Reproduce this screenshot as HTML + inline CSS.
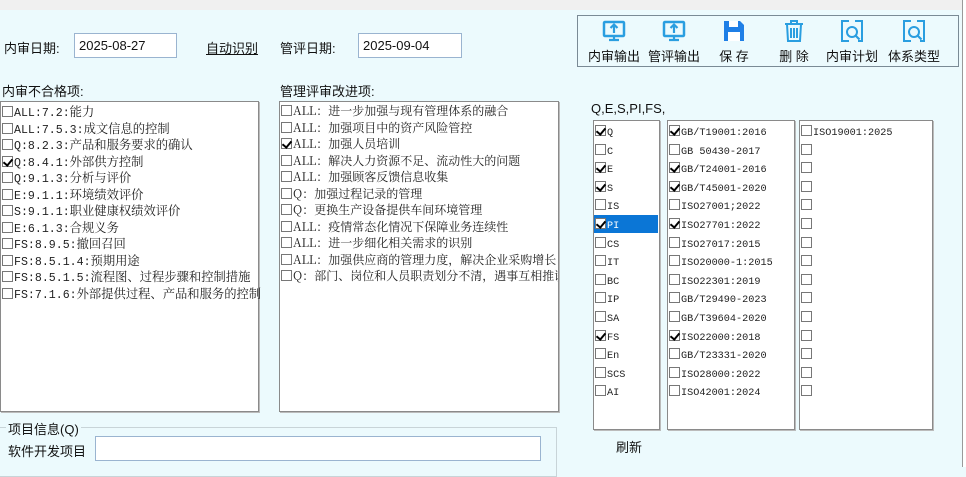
<!DOCTYPE html>
<html><head><meta charset="utf-8"><style>
*{box-sizing:border-box;margin:0;padding:0}
body{width:966px;height:467px;overflow:hidden;background:#ecfafd;position:relative;font-family:"Liberation Sans","Noto Sans CJK SC",sans-serif;font-size:13px;color:#111}
.a{position:absolute}
.title{left:0;top:0;width:966px;height:10px;background:#f0f0f0}
.inp{background:#fff;border:1px solid #9ab4d0;font-size:13px;padding:2px 4px;height:25px;line-height:19px}
.box{background:#fff;border:1px solid #8a8a8a;box-shadow:1px 1px 0 #bbb}
.row{position:absolute;left:2px;white-space:nowrap;font-family:"Noto Serif CJK SC",serif;font-size:12px;line-height:16px;height:16px;color:#222}
.row i{font-family:"Liberation Mono",monospace;font-style:normal;font-size:10.7px}
.L .row{font-size:12.3px}
.L .row i{font-size:11.6px}
.R .row i{font-size:10.2px}
.cb{display:inline-block;width:11px;height:11px;border:1px solid #777;background:#fff;vertical-align:-1px;margin-right:1px;position:relative}
.cb.c::after{content:"";position:absolute;left:2px;top:0px;width:4px;height:7px;border:solid #000;border-width:0 2px 2px 0;transform:rotate(40deg)}
.tb{top:15px;left:577px;width:382px;height:52px;border:1px solid #7a8a95}
.btn{position:absolute;top:18px;font-size:13px;text-align:center;width:60px}
.btn svg{display:block;margin:0 auto 2px}
</style></head><body>
<div class="a title"></div>
<div class="a" style="left:4px;top:38px">内审日期:</div>
<div class="a inp" style="left:74px;top:33px;width:103px">2025-08-27</div>
<div class="a" style="left:206px;top:38px;text-decoration:underline">自动识别</div>
<div class="a" style="left:280px;top:38px">管评日期:</div>
<div class="a inp" style="left:358px;top:33px;width:104px">2025-09-04</div>
<div class="a" style="left:2px;top:81px">内审不合格项:</div>
<div class="a" style="left:280px;top:81px">管理评审改进项:</div>

<div class="a box" style="left:0;top:101px;width:259px;height:311px"></div>
<div class="a L" style="left:0;top:103px">
<div class="row" style="top:0"><span class="cb"></span><i>ALL:7.2:</i>能力</div>
<div class="row" style="top:16.5px"><span class="cb"></span><i>ALL:7.5.3:</i>成文信息的控制</div>
<div class="row" style="top:33px"><span class="cb"></span><i>Q:8.2.3:</i>产品和服务要求的确认</div>
<div class="row" style="top:49.5px"><span class="cb c"></span><i>Q:8.4.1:</i>外部供方控制</div>
<div class="row" style="top:66px"><span class="cb"></span><i>Q:9.1.3:</i>分析与评价</div>
<div class="row" style="top:82.5px"><span class="cb"></span><i>E:9.1.1:</i>环境绩效评价</div>
<div class="row" style="top:99px"><span class="cb"></span><i>S:9.1.1:</i>职业健康权绩效评价</div>
<div class="row" style="top:115.5px"><span class="cb"></span><i>E:6.1.3:</i>合规义务</div>
<div class="row" style="top:132px"><span class="cb"></span><i>FS:8.9.5:</i>撤回召回</div>
<div class="row" style="top:148.5px"><span class="cb"></span><i>FS:8.5.1.4:</i>预期用途</div>
<div class="row" style="top:165px"><span class="cb"></span><i>FS:8.5.1.5:</i>流程图、过程步骤和控制措施</div>
<div class="row" style="top:181.5px"><span class="cb"></span><i>FS:7.1.6:</i>外部提供过程、产品和服务的控制</div>
</div>

<div class="a box" style="left:279px;top:101px;width:280px;height:311px;overflow:hidden">
<div class="row" style="top:1px;left:1px"><span class="cb"></span>ALL：进一步加强与现有管理体系的融合</div>
<div class="row" style="top:17.5px;left:1px"><span class="cb"></span>ALL：加强项目中的资产风险管控</div>
<div class="row" style="top:34px;left:1px"><span class="cb c"></span>ALL：加强人员培训</div>
<div class="row" style="top:50.5px;left:1px"><span class="cb"></span>ALL：解决人力资源不足、流动性大的问题</div>
<div class="row" style="top:67px;left:1px"><span class="cb"></span>ALL：加强顾客反馈信息收集</div>
<div class="row" style="top:83.5px;left:1px"><span class="cb"></span>Q：加强过程记录的管理</div>
<div class="row" style="top:100px;left:1px"><span class="cb"></span>Q：更换生产设备提供车间环境管理</div>
<div class="row" style="top:116.5px;left:1px"><span class="cb"></span>ALL：疫情常态化情况下保障业务连续性</div>
<div class="row" style="top:133px;left:1px"><span class="cb"></span>ALL：进一步细化相关需求的识别</div>
<div class="row" style="top:149.5px;left:1px"><span class="cb"></span>ALL：加强供应商的管理力度，解决企业采购增长</div>
<div class="row" style="top:166px;left:1px"><span class="cb"></span>Q：部门、岗位和人员职责划分不清，遇事互相推诿</div>
</div>

<div class="a tb"></div>
<div class="btn a" style="left:584px"><svg width="26" height="26" viewBox="0 0 26 26"><rect x="3" y="4" width="20" height="14" rx="1" fill="none" stroke="#2a9ee0" stroke-width="2.5"/><path d="M13 15V7M9.5 10l3.5-3.5 3.5 3.5M8 22h10M13 18v4" stroke="#2a9ee0" stroke-width="2.2" fill="none"/></svg>内审输出</div>
<div class="btn a" style="left:644px"><svg width="26" height="26" viewBox="0 0 26 26"><rect x="3" y="4" width="20" height="14" rx="1" fill="none" stroke="#2a9ee0" stroke-width="2.5"/><path d="M13 15V7M9.5 10l3.5-3.5 3.5 3.5M8 22h10M13 18v4" stroke="#2a9ee0" stroke-width="2.2" fill="none"/></svg>管评输出</div>
<div class="btn a" style="left:704px"><svg width="26" height="26" viewBox="0 0 26 26"><path d="M3 3h16l4 4v16H3z" fill="#1f7fe6"/><rect x="8" y="3" width="9" height="6" fill="#fff"/><rect x="7" y="14" width="12" height="9" fill="#fff"/></svg>保 存</div>
<div class="btn a" style="left:764px"><svg width="26" height="26" viewBox="0 0 26 26"><path d="M4 6h18M10 6V3h6v3M6 6l1 17h12l1-17M10 10v10M13 10v10M16 10v10" stroke="#2a9ee0" stroke-width="2" fill="none"/></svg>删 除</div>
<div class="btn a" style="left:822px"><svg width="26" height="26" viewBox="0 0 26 26"><path d="M10 3H3v20h7M16 3h7v20h-4" stroke="#2a9ee0" stroke-width="2" fill="none"/><circle cx="13" cy="14" r="5" stroke="#2a9ee0" stroke-width="2" fill="none"/><path d="M16.5 17.5l4 4" stroke="#2a9ee0" stroke-width="2.2"/></svg>内审计划</div>
<div class="btn a" style="left:884px"><svg width="26" height="26" viewBox="0 0 26 26"><path d="M10 3H3v20h7M16 3h7v20h-4" stroke="#2a9ee0" stroke-width="2" fill="none"/><circle cx="13" cy="14" r="5" stroke="#2a9ee0" stroke-width="2" fill="none"/><path d="M16.5 17.5l4 4" stroke="#2a9ee0" stroke-width="2.2"/></svg>体系类型</div>

<div class="a" style="left:591px;top:101px;font-size:13px">Q,E,S,PI,FS,</div>
<div class="a box R" style="left:593px;top:120px;width:67px;height:310px">
<div class="row" style="top:2px;left:1px"><span class="cb c"></span><i>Q</i></div>
<div class="row" style="top:20.6px;left:1px"><span class="cb"></span><i>C</i></div>
<div class="row" style="top:39.2px;left:1px"><span class="cb c"></span><i>E</i></div>
<div class="row" style="top:57.8px;left:1px"><span class="cb c"></span><i>S</i></div>
<div class="row" style="top:76.4px;left:1px"><span class="cb"></span><i>IS</i></div>
<div class="row" style="top:94px;left:0;width:64px;height:18px;background:#0b76d6;color:#fff;padding-left:1px;line-height:18px"><span class="cb c"></span><i>PI</i></div>
<div class="row" style="top:113.6px;left:1px"><span class="cb"></span><i>CS</i></div>
<div class="row" style="top:132.2px;left:1px"><span class="cb"></span><i>IT</i></div>
<div class="row" style="top:150.8px;left:1px"><span class="cb"></span><i>BC</i></div>
<div class="row" style="top:169.4px;left:1px"><span class="cb"></span><i>IP</i></div>
<div class="row" style="top:188px;left:1px"><span class="cb"></span><i>SA</i></div>
<div class="row" style="top:206.6px;left:1px"><span class="cb c"></span><i>FS</i></div>
<div class="row" style="top:225.2px;left:1px"><span class="cb"></span><i>En</i></div>
<div class="row" style="top:243.8px;left:1px"><span class="cb"></span><i>SCS</i></div>
<div class="row" style="top:262.4px;left:1px"><span class="cb"></span><i>AI</i></div>
</div>
<div class="a box R" style="left:667px;top:120px;width:128px;height:310px">
<div class="row" style="top:2px;left:1px"><span class="cb c"></span><i>GB/T19001:2016</i></div>
<div class="row" style="top:20.6px;left:1px"><span class="cb"></span><i>GB 50430-2017</i></div>
<div class="row" style="top:39.2px;left:1px"><span class="cb c"></span><i>GB/T24001-2016</i></div>
<div class="row" style="top:57.8px;left:1px"><span class="cb c"></span><i>GB/T45001-2020</i></div>
<div class="row" style="top:76.4px;left:1px"><span class="cb"></span><i>ISO27001;2022</i></div>
<div class="row" style="top:95px;left:1px"><span class="cb c"></span><i>ISO27701:2022</i></div>
<div class="row" style="top:113.6px;left:1px"><span class="cb"></span><i>ISO27017:2015</i></div>
<div class="row" style="top:132.2px;left:1px"><span class="cb"></span><i>ISO20000-1:2015</i></div>
<div class="row" style="top:150.8px;left:1px"><span class="cb"></span><i>ISO22301:2019</i></div>
<div class="row" style="top:169.4px;left:1px"><span class="cb"></span><i>GB/T29490-2023</i></div>
<div class="row" style="top:188px;left:1px"><span class="cb"></span><i>GB/T39604-2020</i></div>
<div class="row" style="top:206.6px;left:1px"><span class="cb c"></span><i>ISO22000:2018</i></div>
<div class="row" style="top:225.2px;left:1px"><span class="cb"></span><i>GB/T23331-2020</i></div>
<div class="row" style="top:243.8px;left:1px"><span class="cb"></span><i>ISO28000:2022</i></div>
<div class="row" style="top:262.4px;left:1px"><span class="cb"></span><i>ISO42001:2024</i></div>
</div>
<div class="a box R" style="left:799px;top:120px;width:134px;height:310px">
<div class="row" style="top:2px;left:1px"><span class="cb"></span><i>ISO19001:2025</i></div>
<div class="row" style="top:20.6px;left:1px"><span class="cb"></span></div>
<div class="row" style="top:39.2px;left:1px"><span class="cb"></span></div>
<div class="row" style="top:57.8px;left:1px"><span class="cb"></span></div>
<div class="row" style="top:76.4px;left:1px"><span class="cb"></span></div>
<div class="row" style="top:95px;left:1px"><span class="cb"></span></div>
<div class="row" style="top:113.6px;left:1px"><span class="cb"></span></div>
<div class="row" style="top:132.2px;left:1px"><span class="cb"></span></div>
<div class="row" style="top:150.8px;left:1px"><span class="cb"></span></div>
<div class="row" style="top:169.4px;left:1px"><span class="cb"></span></div>
<div class="row" style="top:188px;left:1px"><span class="cb"></span></div>
<div class="row" style="top:206.6px;left:1px"><span class="cb"></span></div>
<div class="row" style="top:225.2px;left:1px"><span class="cb"></span></div>
<div class="row" style="top:243.8px;left:1px"><span class="cb"></span></div>
<div class="row" style="top:262.4px;left:1px"><span class="cb"></span></div>
</div>
<div class="a" style="left:616px;top:437px">刷新</div>

<div class="a" style="left:0;top:427px;width:557px;height:50px;border:1px solid #c8d4d8;border-left:none"></div>
<div class="a" style="left:6px;top:419px;background:#ecfafd;padding:0 2px">项目信息(Q)</div>
<div class="a" style="left:8px;top:441px">软件开发项目</div>
<div class="a inp" style="left:95px;top:436px;width:446px;height:25px"></div>

<div class="a" style="left:962px;top:0;width:1px;height:467px;background:#9a9a9a"></div>
<div class="a" style="left:963px;top:0;width:3px;height:467px;background:#fff"></div>
</body></html>
